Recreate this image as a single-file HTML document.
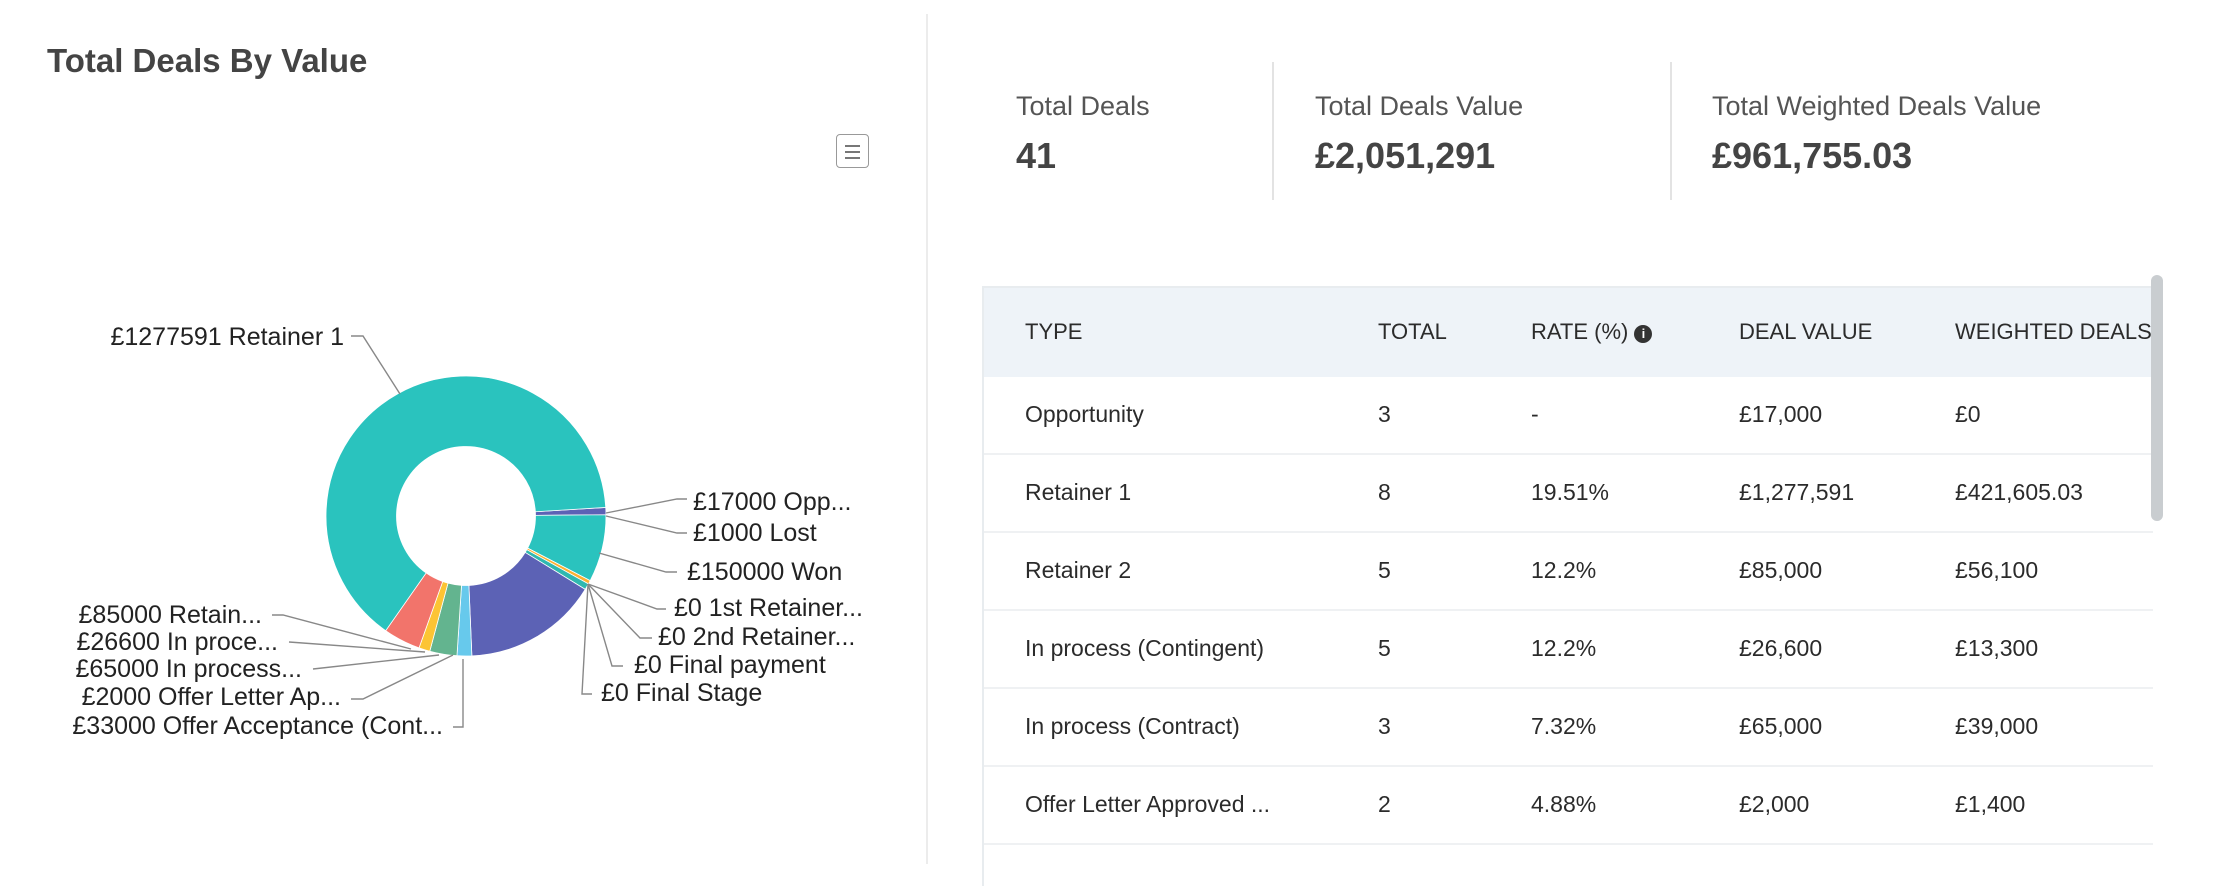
<!DOCTYPE html>
<html><head><meta charset="utf-8"><style>
html,body{margin:0;padding:0;background:#fff;width:2222px;height:864px;overflow:hidden;font-family:"Liberation Sans",sans-serif;}
.title{position:absolute;left:47px;top:42px;font-size:33px;font-weight:bold;color:#444;}
.vdiv{position:absolute;left:926px;top:14px;width:2px;height:850px;background:#ececec;}
.menu{position:absolute;left:836px;top:134px;width:33px;height:34px;border:1.5px solid #999;border-radius:4px;box-sizing:border-box;}
.menu i{position:absolute;left:8px;width:15px;height:2px;background:#777;}
.stat{position:absolute;top:91px;color:#555;}
.stat .l{font-size:27px;}
.stat .v{font-size:36px;font-weight:bold;color:#444;margin-top:13px;}
.sdiv{position:absolute;top:62px;width:2px;height:138px;background:#e3e3e3;}
.table{position:absolute;left:982px;top:286px;width:1169px;height:600px;border-left:2px solid #e8ecef;border-top:2px solid #e8ecef;box-sizing:border-box;}
.hdr{position:absolute;left:0;top:0;width:1169px;height:89px;background:#eef3f8;}
.cell{position:absolute;font-size:22px;color:#2b2b2b;white-space:nowrap;}
.row{font-size:23px;}
.rowline{position:absolute;left:0;width:1169px;height:2px;background:#eff1f3;}
.sb{position:absolute;left:2151px;top:275px;width:12px;height:246px;background:#c9cdd0;border-radius:6px;}
svg text{font-family:"Liberation Sans",sans-serif;font-size:25px;fill:#222;}
</style></head><body>
<div class="title">Total Deals By Value</div>
<div class="vdiv"></div>
<div class="menu"><i style="top:10px"></i><i style="top:16px"></i><i style="top:22px"></i></div>

<svg width="926" height="864" style="position:absolute;left:0;top:0">
<g id="donut"></g>
<g fill="none" stroke="#888" stroke-width="1.4">
<polyline points="351,336 363,336 400,394"/>
<polyline points="606,513 677,499 687,499"/>
<polyline points="606,516 677,533 687,533"/>
<polyline points="599,553 666,572 677,572"/>
<polyline points="588,584 657,609 666,609"/>
<polyline points="588,584 640,638 652,638"/>
<polyline points="588,584 612,666 623,666"/>
<polyline points="588,584 582,694 592,694"/>
<polyline points="272,615 283,615 411,649"/>
<polyline points="289,642 425,652"/>
<polyline points="313,669 439,655"/>
<polyline points="351,699 363,699 453,655"/>
<polyline points="453,727 463,727 463,659"/>
</g>
<text x="344" y="345" text-anchor="end">£1277591 Retainer 1</text>
<text x="693" y="510">£17000 Opp...</text>
<text x="693" y="541">£1000 Lost</text>
<text x="687" y="580">£150000 Won</text>
<text x="674" y="616">£0 1st Retainer...</text>
<text x="658" y="645">£0 2nd Retainer...</text>
<text x="634" y="673">£0 Final payment</text>
<text x="601" y="701">£0 Final Stage</text>
<text x="262" y="623" text-anchor="end">£85000 Retain...</text>
<text x="278" y="650" text-anchor="end">£26600 In proce...</text>
<text x="302" y="677" text-anchor="end">£65000 In process...</text>
<text x="341" y="705" text-anchor="end">£2000 Offer Letter Ap...</text>
<text x="443" y="734" text-anchor="end">£33000 Offer Acceptance (Cont...</text>
</svg>

<div class="stat" style="left:1016px"><div class="l">Total Deals</div><div class="v">41</div></div>
<div class="sdiv" style="left:1272px"></div>
<div class="stat" style="left:1315px"><div class="l">Total Deals Value</div><div class="v">£2,051,291</div></div>
<div class="sdiv" style="left:1670px"></div>
<div class="stat" style="left:1712px"><div class="l">Total Weighted Deals Value</div><div class="v">£961,755.03</div></div>

<div class="table">
<div class="hdr"></div>
<div class="cell" style="left:41px;top:31px">TYPE</div>
<div class="cell" style="left:394px;top:31px">TOTAL</div>
<div class="cell" style="left:547px;top:31px">RATE (%) <span style="display:inline-block;width:18px;height:18px;border-radius:9px;background:#333;color:#fff;font-size:13px;font-weight:bold;text-align:center;line-height:18px;vertical-align:1px">i</span></div>
<div class="cell" style="left:755px;top:31px">DEAL VALUE</div>
<div class="cell" style="left:971px;top:31px">WEIGHTED DEALS</div>
<div id="rows"></div>
</div>
<div class="sb"></div>
<script>
var rows=[["Opportunity","3","-","£17,000","£0"],["Retainer 1","8","19.51%","£1,277,591","£421,605.03"],["Retainer 2","5","12.2%","£85,000","£56,100"],["In process (Contingent)","5","12.2%","£26,600","£13,300"],["In process (Contract)","3","7.32%","£65,000","£39,000"],["Offer Letter Approved ...","2","4.88%","£2,000","£1,400"]];
var xs=[41,394,547,755,971],h="";
rows.forEach(function(r,i){var top=89+i*78;
r.forEach(function(c,j){h+='<div class="cell row" style="left:'+xs[j]+'px;top:'+(top+24)+'px">'+c+'</div>';});
h+='<div class="rowline" style="top:'+(top+76)+'px"></div>';});
document.getElementById('rows').innerHTML=h;
var cx=466,cy=516,R=140,r=69.5;
var seg=[[-3.5,-0.5,"#5c62b5"],[-0.5,27.5,"#2ac3be"],[27.5,29,"#fcb131"],[29,31.6,"#2fb8b0"],[31.6,87.6,"#5c62b5"],[87.6,93.7,"#67c9ec"],[93.7,105,"#63b48f"],[105,109.6,"#fcc434"],[109.6,125,"#f2746b"],[125,356.5,"#2ac3be"]];
function p(a,rad){a=a*Math.PI/180;return (cx+rad*Math.cos(a)).toFixed(2)+","+(cy+rad*Math.sin(a)).toFixed(2);}
var s="";
seg.forEach(function(g){var l=(g[1]-g[0])>180?1:0;
s+='<path d="M'+p(g[0],R)+' A'+R+','+R+' 0 '+l+' 1 '+p(g[1],R)+' L'+p(g[1],r)+' A'+r+','+r+' 0 '+l+' 0 '+p(g[0],r)+'Z" fill="'+g[2]+'" stroke="#fff" stroke-width="0.8"/>';});
document.getElementById('donut').innerHTML=s;
</script>
</body></html>
